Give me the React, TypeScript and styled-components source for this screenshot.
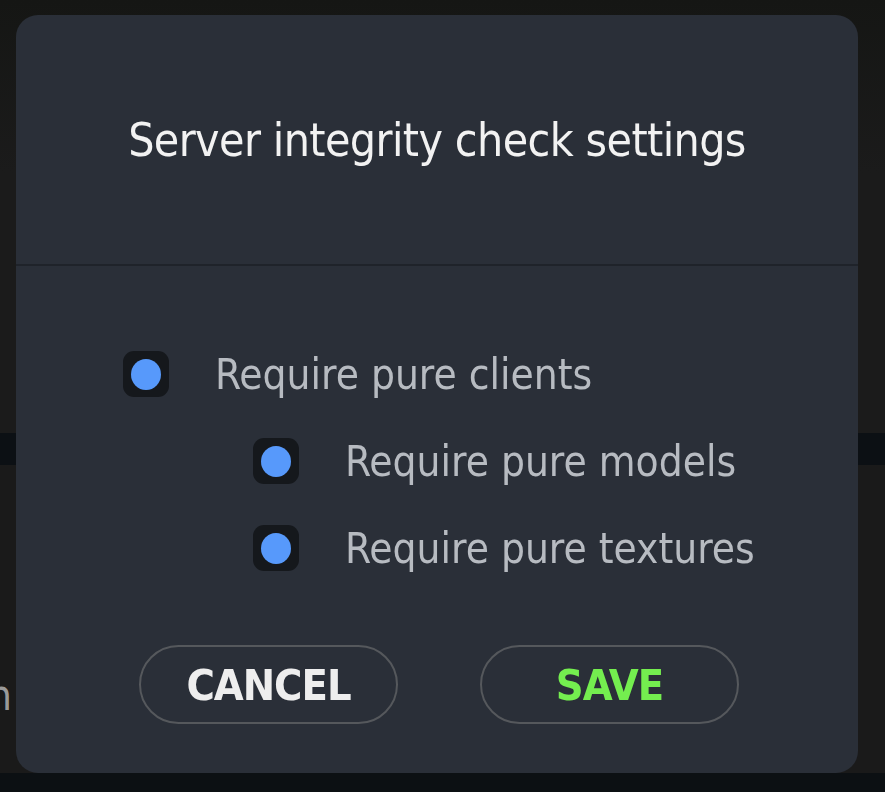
import styled, { createGlobalStyle } from "styled-components";

const GlobalStyle = createGlobalStyle`
  html, body {
    margin: 0;
    padding: 0;
    background: #1a1a1a;
  }
  * {
    box-sizing: border-box;
  }
`;

const font = `"Liberation Sans Narrow", "DejaVu Sans Condensed", "Liberation Sans", sans-serif`;

const Backdrop = styled.div`
  width: 885px;
  height: 792px;
  display: flex;
  flex-direction: column;
  background: #1a1a1a;
  overflow: hidden;
`;

const TopArea = styled.div`
  height: 433px;
  background: linear-gradient(#151614, #1b1b1b 40%);
`;

const DarkBand = styled.div`
  height: 32px;
  background: #0c1014;
`;

const MiddleArea = styled.div`
  height: 308px;
  display: flex;
  flex-direction: column;
  justify-content: flex-end;
  padding-bottom: 56px;
`;

const SideLabel = styled.div`
  width: 12px;
  display: flex;
  justify-content: flex-end;
  overflow: hidden;
  font-family: ${font};
  font-size: 42px;
  color: #9a9a9a;
  white-space: nowrap;
  line-height: 1;
`;

const BottomBand = styled.div`
  flex: 1;
  background: #0c1013;
`;

const Modal = styled.div`
  position: fixed;
  top: 15px;
  left: 16px;
  width: 842px;
  height: 758px;
  background: #2a2f38;
  border-radius: 22px;
  display: flex;
  flex-direction: column;
  font-family: ${font};
  overflow: hidden;
`;

const Header = styled.div`
  height: 251px;
  display: flex;
  align-items: center;
  justify-content: center;
  border-bottom: 2px solid #1f232a;
`;

const Title = styled.h2`
  margin: 0;
  font-size: 46px;
  font-weight: 400;
  letter-spacing: -0.6px;
  color: #f2f2f2;
`;

const Body = styled.div`
  flex: 1;
  display: flex;
  flex-direction: column;
  padding: 85px 0 49px;
`;

const OptionList = styled.div`
  display: flex;
  flex-direction: column;
  gap: 41px;
`;

const Option = styled.label<{ $indent: number }>`
  display: flex;
  align-items: center;
  gap: 46px;
  padding-left: ${(p) => 107 + p.$indent}px;
  height: 46px;
`;

const Check = styled.span`
  width: 46px;
  height: 46px;
  border-radius: 11px;
  background: #15181c;
  display: flex;
  align-items: center;
  justify-content: center;
  flex-shrink: 0;
`;

const Dot = styled.span`
  width: 30px;
  height: 31px;
  border-radius: 50%;
  background: #5799fb;
`;

const OptionText = styled.span`
  font-size: 42px;
  color: #b7bbc1;
`;

const Actions = styled.div`
  margin-top: auto;
  display: flex;
  justify-content: center;
  gap: 82px;
  padding-left: 4px;
`;

const PillButton = styled.button<{ $tone: string }>`
  width: 259px;
  height: 79px;
  border-radius: 40px;
  border: 2px solid #55585c;
  background: transparent;
  font-family: ${font};
  font-weight: 700;
  font-size: 43px;
  letter-spacing: -1px;
  color: ${(p) => p.$tone};
  display: flex;
  align-items: center;
  justify-content: center;
  padding: 0;
`;

const options = [
  { label: "Require pure clients", indent: 0 },
  { label: "Require pure models", indent: 130 },
  { label: "Require pure textures", indent: 130 },
];

export default function App() {
  return (
    <>
      <GlobalStyle />
      <Backdrop>
        <TopArea />
        <DarkBand />
        <MiddleArea>
          <SideLabel>Join</SideLabel>
        </MiddleArea>
        <BottomBand />
      </Backdrop>
      <Modal>
        <Header>
          <Title>Server integrity check settings</Title>
        </Header>
        <Body>
          <OptionList>
            {options.map((o) => (
              <Option key={o.label} $indent={o.indent}>
                <Check>
                  <Dot />
                </Check>
                <OptionText>{o.label}</OptionText>
              </Option>
            ))}
          </OptionList>
          <Actions>
            <PillButton $tone="#eeeeee">CANCEL</PillButton>
            <PillButton $tone="#74ee4f">SAVE</PillButton>
          </Actions>
        </Body>
      </Modal>
    </>
  );
}
